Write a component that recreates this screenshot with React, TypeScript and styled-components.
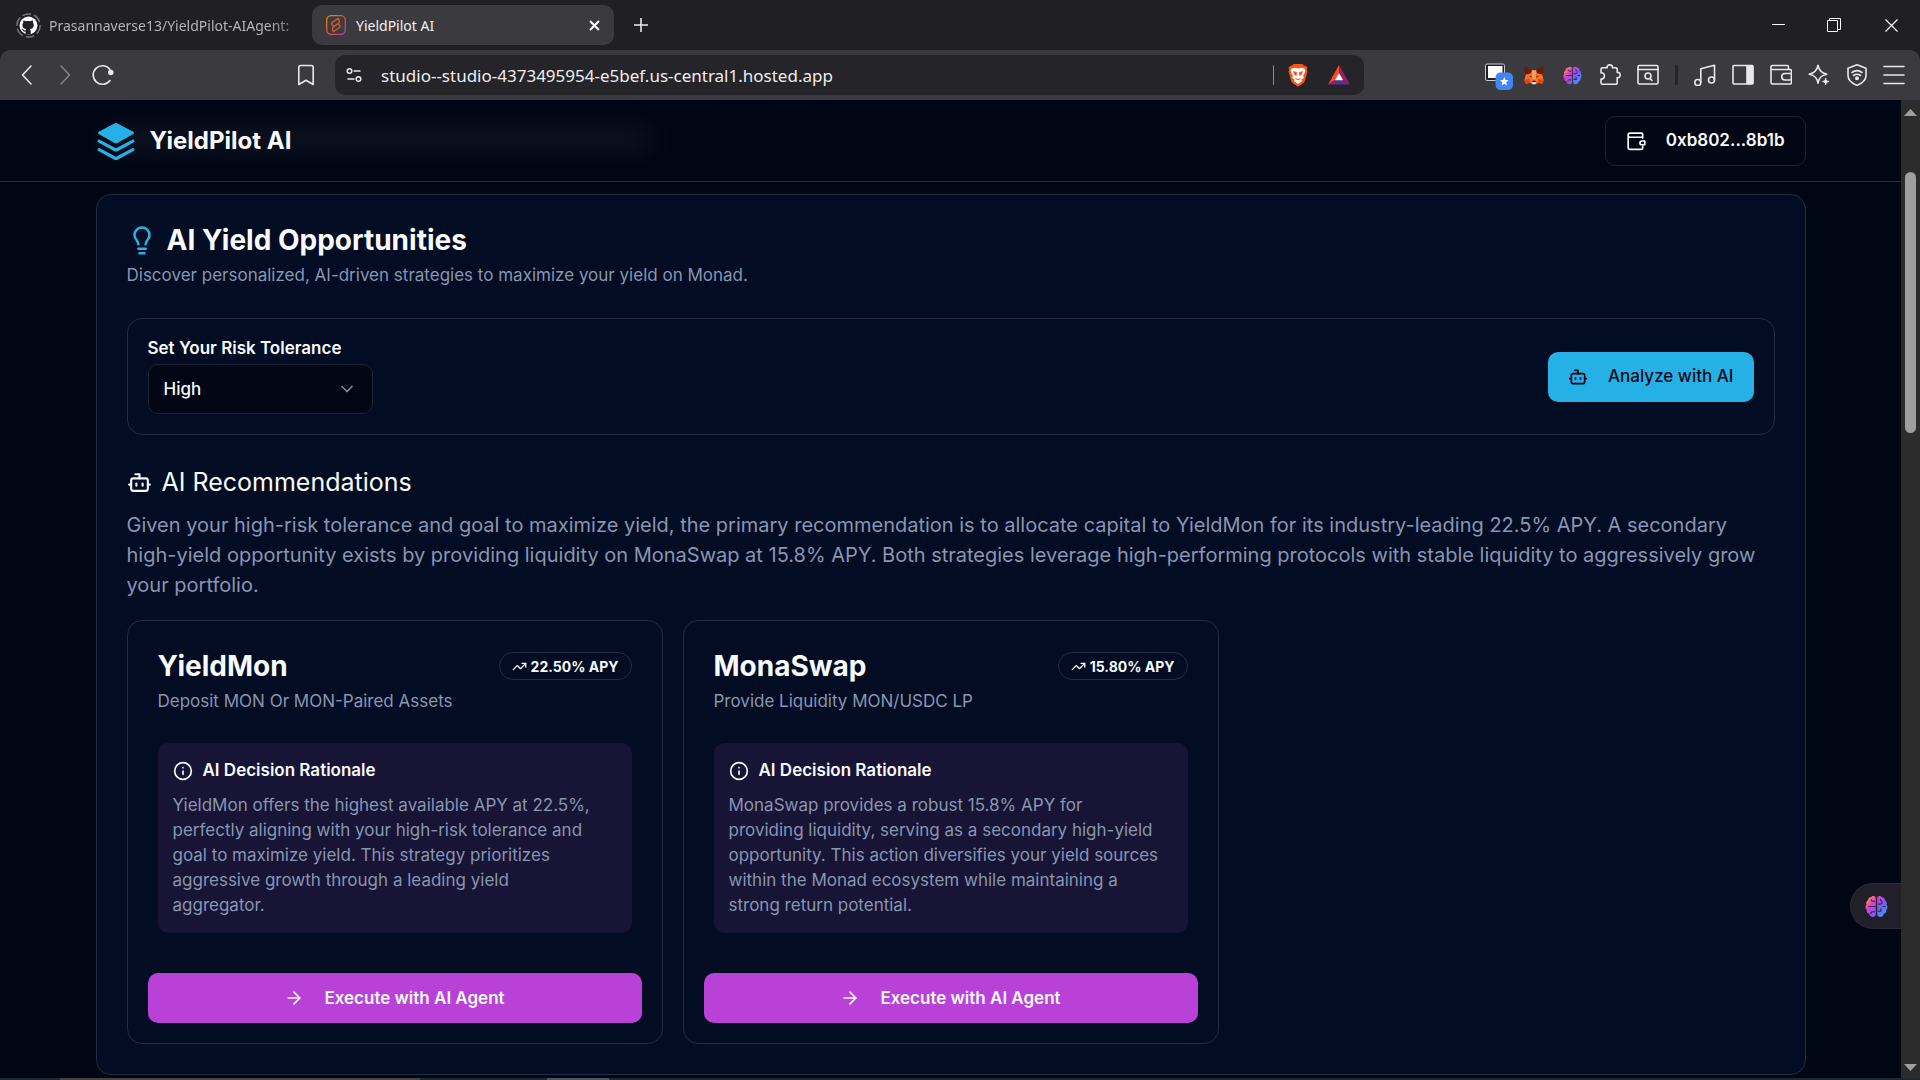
import React from "react";
import styled, { createGlobalStyle, css } from "styled-components";
import { ArrowRight, Bot, ChevronDown, Info, TrendingUp } from "lucide-react";

const color = {
  page: "#010614",
  card: "#020c23",
  line: "#212d44",
  control: "#1c2434",
  text: "#f8fafc",
  muted: "#8996b0",
  primary: "#25b1e6",
  accent: "#b941d8",
  rationale: "#171435",
  frame: "#201f24",
  bar: "#3b3a3f",
  field: "#252429",
  icon: "#e9e9ec",
};

const uiFont = `"Noto Sans", "Open Sans", sans-serif`;
const bodyFont = `Inter, "Liberation Sans", sans-serif`;

const GlobalStyle = createGlobalStyle`
  *, *::before, *::after { box-sizing: border-box; }
  body { margin: 0; background: ${color.page}; overflow: hidden; }
  h1, h2, h3, h4, p { margin: 0; }
  button, input, select { font: inherit; color: inherit; margin: 0; }
  button { border: 0; background: none; padding: 0; cursor: pointer; }
  svg { display: block; flex: none; }
`;

/* ---------- browser frame ---------- */

const Window = styled.div`
  display: flex;
  flex-direction: column;
  height: 100vh;
  background: ${color.frame};
  font-family: ${uiFont};
  color: ${color.icon};
`;

const TabStrip = styled.header`
  display: flex;
  align-items: center;
  height: 50px;
  flex: none;
`;

const Tab = styled.div<{ $active?: boolean }>`
  display: flex;
  align-items: center;
  gap: ${(p) => (p.$active ? 10 : 8)}px;
  width: ${(p) => (p.$active ? 302 : 296)}px;
  height: 40px;
  margin-left: ${(p) => (p.$active ? 0 : 16)}px;
  padding: 0 ${(p) => (p.$active ? 10 : 6)}px 0 ${(p) => (p.$active ? 14 : 0)}px;
  border-radius: 10px;
  font-size: 14px;
  ${(p) =>
    p.$active
      ? css`
          background: ${color.bar};
          color: #f1f1f3;
        `
      : css`
          color: #b4b3b8;
        `}
`;

const TabTitle = styled.button<{ $fade?: boolean }>`
  flex: 1;
  min-width: 0;
  overflow: hidden;
  white-space: nowrap;
  text-align: left;
  ${(p) =>
    p.$fade &&
    css`
      mask-image: linear-gradient(to right, #000 85%, transparent 105%);
    `}
`;

const IconButton = styled.button<{ $w?: number; $dim?: boolean }>`
  display: flex;
  align-items: center;
  justify-content: center;
  width: ${(p) => p.$w ?? 38}px;
  height: 40px;
  flex: none;
  opacity: ${(p) => (p.$dim ? 0.4 : 1)};
`;

const WindowControls = styled.div`
  display: flex;
  margin-left: auto;
`;

const Toolbar = styled.div`
  display: flex;
  align-items: center;
  height: 50px;
  flex: none;
  padding: 0 8px;
  background: ${color.bar};
  border-radius: 10px 10px 0 0;
`;

const NavButtons = styled.div`
  display: flex;
  width: 327px;
  flex: none;
  padding-right: 10px;

  & > :last-child {
    margin-left: auto;
  }
`;

const AddressBar = styled.div`
  display: flex;
  align-items: center;
  flex: 1;
  min-width: 0;
  height: 40px;
  border-radius: 10px;
  background: ${color.field};
`;

const AddressInput = styled.input`
  flex: 1;
  min-width: 0;
  padding: 0 8px;
  border: 0;
  outline: 0;
  background: none;
  font-size: 17px;
  color: #eeeef0;
`;

const Divider = styled.span<{ $light?: boolean }>`
  width: ${(p) => (p.$light ? 1 : 3)}px;
  height: 20px;
  margin: 0 8px;
  border-radius: 1px;
  background: ${(p) => (p.$light ? "#8b8a90" : "#252429")};
`;

const Extensions = styled.div`
  display: flex;
  align-items: center;
  justify-content: flex-end;
  width: 548px;
  flex: none;
`;

const Viewport = styled.div`
  display: flex;
  flex: 1;
  min-height: 0;
`;

const Scrollbar = styled.div`
  display: flex;
  flex-direction: column;
  align-items: center;
  width: 19px;
  flex: none;
  padding: 9px 0 7px;
  background: #2c2c2c;
`;

const ScrollTrack = styled.div`
  flex: 1;
  padding-top: 56px;
`;

const ScrollThumb = styled.div`
  width: 11px;
  height: 261px;
  border-radius: 6px;
  background: #9f9f9f;
`;

const Taskbar = styled.div`
  display: flex;
  gap: 127px;
  height: 2px;
  flex: none;
  padding-left: 60px;
  background: #1d2730;

  &::before {
    content: "";
    width: 360px;
    background: #45423f;
  }

  &::after {
    content: "";
    width: 62px;
    background: #4c565c;
  }
`;

/* ---------- page ---------- */

const Page = styled.div`
  position: relative;
  flex: 1;
  min-width: 0;
  overflow: hidden;
  background: ${color.page};
  color: ${color.text};
  font-family: ${bodyFont};
  font-size: 17px;
  line-height: 25px;
`;

const SiteHeader = styled.header`
  position: relative;
  height: 82px;
  border-bottom: 1px solid ${color.line};
  overflow: hidden;

  &::before {
    content: "";
    position: absolute;
    left: 110px;
    top: 30px;
    width: 540px;
    height: 18px;
    background: rgba(148, 163, 184, 0.12);
    filter: blur(14px);
  }
`;

const Container = styled.div`
  width: 100%;
  max-width: 1750px;
  margin: 0 auto;
  padding: 0 20px;
`;

const HeaderRow = styled(Container)`
  position: relative;
  display: flex;
  align-items: center;
  justify-content: space-between;
  height: 81px;
`;

const Brand = styled.a`
  display: flex;
  align-items: center;
  gap: 14px;
  color: inherit;
  text-decoration: none;
  font-size: 24px;
  font-weight: 700;
`;

const Button = styled.button<{ $kind: "outline" | "primary" | "accent" }>`
  display: flex;
  align-items: center;
  justify-content: center;
  gap: 20px;
  height: 50px;
  padding: 0 20px;
  border-radius: 10px;
  font-size: 17px;
  font-weight: 500;
  white-space: nowrap;
  ${(p) =>
    p.$kind === "outline" &&
    css`
      border: 1px solid ${color.control};
      background: ${color.page};
      font-weight: 600;
    `}
  ${(p) =>
    p.$kind === "primary" &&
    css`
      background: ${color.primary};
      color: #020817;
    `}
  ${(p) =>
    p.$kind === "accent" &&
    css`
      background: ${color.accent};
      font-weight: 600;
    `}
`;

const Main = styled(Container)`
  padding-top: 12px;
`;

const Panel = styled.section`
  padding: 30px;
  border: 1px solid ${color.line};
  border-radius: 15px;
  background: ${color.card};
`;

const PanelTitle = styled.h1`
  display: flex;
  align-items: center;
  gap: 10px;
  font-size: 28px;
  line-height: 30px;
  font-weight: 700;
`;

const Lead = styled.p`
  margin-top: 8px;
  color: ${color.muted};
`;

const RiskBox = styled.div`
  display: flex;
  align-items: center;
  justify-content: space-between;
  margin-top: 30px;
  padding: 20px;
  border: 1px solid ${color.line};
  border-radius: 15px;
`;

const Field = styled.div`
  display: grid;
  gap: 7px;
`;

const Label = styled.label`
  line-height: 18px;
  font-weight: 600;
`;

const SelectBox = styled.div`
  display: grid;
  align-items: center;
  width: 225px;

  & > * {
    grid-area: 1 / 1;
  }

  & > svg {
    justify-self: end;
    margin-right: 16px;
    pointer-events: none;
    opacity: 0.55;
  }
`;

const Select = styled.select`
  appearance: none;
  width: 100%;
  height: 50px;
  padding: 0 15px;
  border: 1px solid ${color.control};
  border-radius: 10px;
  background: ${color.page};
  font-weight: 500;
`;

const SectionTitle = styled.h2`
  display: flex;
  align-items: center;
  gap: 10px;
  margin-top: 30px;
  font-size: 25px;
  line-height: 35px;
  font-weight: 400;
`;

const Summary = styled.p`
  margin-top: 10px;
  font-size: 20px;
  line-height: 30px;
  color: ${color.muted};
`;

const Cards = styled.div`
  display: grid;
  grid-template-columns: repeat(3, 1fr);
  gap: 20px;
  margin-top: 20px;
`;

const Card = styled.article`
  display: flex;
  flex-direction: column;
  justify-content: space-between;
  padding: 30px 20px 20px;
  border: 1px solid ${color.line};
  border-radius: 15px;
`;

const CardBody = styled.div`
  padding: 0 10px;
`;

const CardHead = styled.div`
  display: flex;
  align-items: center;
  justify-content: space-between;
`;

const CardTitle = styled.h3`
  font-size: 28px;
  line-height: 30px;
  font-weight: 700;
`;

const Badge = styled.span`
  display: flex;
  align-items: center;
  gap: 4px;
  height: 28px;
  padding: 0 12px;
  border: 1px solid ${color.line};
  border-radius: 14px;
  font-size: 14px;
  font-weight: 700;
`;

const Rationale = styled.div`
  margin: 29px 0 40px;
  padding: 15px 28px 15px 15px;
  border-radius: 10px;
  background: ${color.rationale};
  color: ${color.muted};
`;

const RationaleTitle = styled.h4`
  display: flex;
  align-items: center;
  gap: 10px;
  margin-bottom: 10px;
  font-size: 17px;
  font-weight: 600;
  color: ${color.text};
`;

const Assistant = styled.button`
  position: absolute;
  right: 0;
  top: 783px;
  display: flex;
  align-items: center;
  width: 51px;
  height: 46px;
  padding-left: 14px;
  border: 1px solid #2b2933;
  border-right: 0;
  border-radius: 23px 0 0 23px;
  background: #211f2a;
`;

/* ---------- drawings ---------- */

const line = {
  fill: "none",
  stroke: "currentColor",
  strokeWidth: 1.6,
  strokeLinecap: "round" as const,
  strokeLinejoin: "round" as const,
};

const GithubMark = () => (
  <svg width="25" height="25" viewBox="0 0 25 25">
    <circle cx="12.5" cy="12.5" r="11.6" fill="none" stroke="#77767b" strokeWidth="1.5" strokeDasharray="9 3" />
    <circle cx="12.5" cy="12.5" r="9" fill="#fff" />
    <path
      fill="#201f24"
      d="M9.6 21.2v-2.6c-2 .4-2.7-.6-3.1-1.5-.2-.5-.6-.9-1-1.1.9-.5 1.6.1 2.1.8.5.8 1.1.9 2 .6.1-.6.4-1 .7-1.3-2.3-.3-3.9-1.2-3.9-4 0-1 .3-1.7.9-2.4-.2-.6-.2-1.5.1-2.3.8 0 1.7.5 2.3.9 1.6-.4 3.2-.4 4.8 0 .6-.4 1.5-.9 2.3-.9.3.8.3 1.7.1 2.3.6.7.9 1.4.9 2.4 0 2.8-1.6 3.7-3.9 4 .5.4.8 1.1.8 2v3.1z"
    />
  </svg>
);

const StudioMark = () => (
  <svg width="20" height="20" viewBox="0 0 20 20" fill="none">
    <defs>
      <linearGradient id="studio" x1="0" y1="0" x2="1" y2="1">
        <stop offset="0" stopColor="#f08a00" />
        <stop offset=".5" stopColor="#e0552f" />
        <stop offset="1" stopColor="#b23cc0" />
      </linearGradient>
    </defs>
    <rect x=".7" y=".7" width="18.6" height="18.6" rx="4.5" stroke="url(#studio)" strokeWidth="1.3" />
    <path
      d="M12.3 3.3 6.2 7.4c-1 .8-.9 2 .1 2.6l2 1.2 4.7-3.5c.7-.6.7-1.3.2-2zM7.3 16.7l6.2-4.2c1-.8.8-1.9-.2-2.5l-1.800-1.100-4.700 3.500c-.7.6-.7 1.300-.2 2z"
      stroke="#e0562f"
      strokeWidth="1.3"
      strokeLinejoin="round"
    />
  </svg>
);

const Glyph = ({ d, size = 22, children }: { d?: string; size?: number; children?: React.ReactNode }) => (
  <svg width={size} height={size} viewBox="0 0 22 22" {...line}>
    {d && <path d={d} />}
    {children}
  </svg>
);

const BraveLion = () => (
  <svg width="20" height="24" viewBox="0 0 20 24">
    <path fill="#fb5412" d="M5.5 1h9l1.500 1.800 1.800-.1 1.700 2.300-.7 1.800.6 2-2.600 9.300c-.3 1-.9 1.700-1.700 2.200L10 23.700l-5.100-3.400c-.8-.5-1.400-1.200-1.700-2.200L.6 8.800l.6-2L.5 5l1.700-2.300 1.800.1z" />
    <path fill="#fff" d="M3.5 5.500 7 4.800l3 .8 3-.8 3.500.7 1 2.600-2.400 4.800.7 2-2.700 1.900 1.200 1.300L10 21l-4.300-2.900 1.200-1.300-2.700-1.900.7-2L2.500 8.100z" />
    <path fill="#fb5412" d="m5 8.300 3.400.4.6 1.400-.5 3-2-1.200zM15 8.300l-3.400.4-.6 1.400.5 3 2-1.200zM7 14.600l3 1.600 3-1.600-.8 1.500L10 17.600l-2.200-1.500z" />
  </svg>
);

const BatTriangle = () => (
  <svg width="22" height="20" viewBox="0 0 22 20">
    <path fill="#ff4724" d="M11 0 0 19.500l7-4.300L11 8z" />
    <path fill="#9e1f63" d="m11 0 11 19.500-7-4.300L11 8z" />
    <path fill="#662d91" d="M0 19.500h22l-7-4.300H7z" />
    <path fill="#fff" d="m11 8-4.200 7.300h8.400z" />
  </svg>
);

const PinnedWindow = () => (
  <svg width="30" height="30" viewBox="0 0 30 30">
    <rect x="1.5" y="4" width="19" height="16.500" rx="1.500" fill="#222" stroke="#c9c9cc" />
    <rect x="4" y="6" width="14.500" height="12" fill="#fff" />
    <rect x="11.500" y="12.500" width="17.500" height="17.500" rx="5" fill="#4285f4" />
    <path fill="#fff" d="m20.300 17 1.200 3.100 3.200.2-2.500 2 .8 3.200-2.700-1.800-2.700 1.800.8-3.200-2.500-2 3.200-.2z" />
  </svg>
);

const Fox = () => (
  <svg width="20" height="20" viewBox="0 0 20 20">
    <path fill="#f8702c" d="M2.200 8 6.500 5.200h7L17.800 8l1 4 .9 3.500-1.500 3.200-4.200-1-1.800 1.300H7.800L6 17.700l-4.200 1L.3 15.500 1.200 12z" />
    <path fill="#6b1a05" d="M1 .8 8 5.700 6.500 8.600 1.500 9.600.3 6.200zM19 .8l-7 4.900 1.500 2.900 5 1 1.200-3.400z" />
    <path fill="#ff9d5c" d="m8 5.600 2-.4 2 .4-.3 8.400H8.300z" />
    <path fill="#e3470d" d="m.3 15 5.200-1.200.9 3.700-4.600 1.200zM19.700 15l-5.200-1.200-.9 3.700 4.600 1.200z" />
    <path fill="#27242c" d="m5.200 10.800 2.600.7-.5 1.200zM14.800 10.800l-2.600.7.5 1.200zM8.500 15.700h3l.3 1.300H8.200z" />
    <path fill="#efe9e4" d="M7.800 17.200h4.400l-.7 2H8.500z" />
  </svg>
);

const Brain = ({ size, id }: { size: number; id: string }) => (
  <svg width={size} height={size} viewBox="0 0 24 24">
    <defs>
      <linearGradient id={id} x1="0" y1=".1" x2="1" y2=".9">
        <stop offset=".05" stopColor="#ff9a3d" />
        <stop offset=".3" stopColor="#e53bd0" />
        <stop offset=".62" stopColor="#7b5cf0" />
        <stop offset="1" stopColor="#2ba4ff" />
      </linearGradient>
    </defs>
    <path
      fill={`url(#${id})`}
      d="M11.300 2.600C10.500.6 7.600.4 6.300 2.300 4.200 2.200 3 3.800 3.200 5.600 1.300 6.500.8 8.500 1.700 10 .1 11.500.1 14 1.700 15.300c-.4 2.200.8 3.800 2.600 4.300.6 2.600 2.600 3.800 4.600 3.300 1.400-.3 2.300-1.300 2.400-2.500zM12.700 2.600c.8-2 3.700-2.200 5-.3 2.100-.1 3.300 1.500 3.100 3.300 1.900.9 2.400 2.900 1.500 4.400 1.600 1.500 1.600 4 0 5.300.4 2.200-.8 3.800-2.600 4.300-.6 2.600-2.600 3.800-4.600 3.300-1.400-.3-2.300-1.300-2.400-2.500z"
    />
    <path
      fill="none"
      stroke="#29224a"
      strokeWidth="1.200"
      strokeLinecap="round"
      d="M10.500 12H4M10 6.500H8.500C7 6.500 6.500 5.500 6.500 5M10 17.500H8c-1.500 0-2 1-2 1.700M14 9.500h2c1.500 0 2-1 2-2M14 17h2.500M16.500 17V14.500M16 4.500l1 2M19 12h2"
    />
  </svg>
);

const LayersLogo = () => (
  <svg width="40" height="40" viewBox="0 0 40 40" fill={color.primary}>
    <path d="M18.500 2.400a3 3 0 0 1 3 0L37.300 10.700c1.200.6 1.200 1.700 0 2.300L21.500 22a3 3 0 0 1-3 0L2.700 13c-1.200-.6-1.200-1.700 0-2.300z" />
    <path
      d="M3.100 20.100 18.700 28.500a2.700 2.700 0 0 0 2.600 0L36.900 20.100M3.100 28.600 18.700 37a2.700 2.700 0 0 0 2.600 0L36.900 28.600"
      fill="none"
      stroke={color.primary}
      strokeWidth="3.200"
      strokeLinecap="round"
    />
  </svg>
);

const Bulb = () => (
  <svg width="30" height="30" viewBox="0 0 24 24" fill="none" stroke={color.primary} strokeWidth="2" strokeLinecap="round" strokeLinejoin="round">
    <path d="M9.200 16.200c0-2-.6-2.900-1.600-4.200a6 6 0 1 1 8.800 0c-1 1.300-1.600 2.200-1.600 4.200" strokeLinecap="butt" />
    <path d="M9 19h6M10 22.500h4" />
  </svg>
);

const WalletClasp = () => (
  <svg width="20" height="20" viewBox="0 0 24 24" {...line} strokeWidth={2}>
    <path d="M20 8.500V7.500H5a2.400 2.400 0 0 1 0-5h13.500a1.500 1.500 0 0 1 1.500 1.500v3.500M2.600 5v14.500A2.500 2.500 0 0 0 5 22h13a2 2 0 0 0 2-2v-1.500" />
    <path d="M22.500 12v4.500H19a2.250 2.250 0 0 1 0-4.500z" />
  </svg>
);

/* ---------- content ---------- */

type Strategy = { name: string; action: string; apy: string; rationale: string };

const strategies: Strategy[] = [
  {
    name: "YieldMon",
    action: "Deposit MON Or MON-Paired Assets",
    apy: "22.50% APY",
    rationale:
      "YieldMon offers the highest available APY at 22.5%, perfectly aligning with your high-risk tolerance and goal to maximize yield. This strategy prioritizes aggressive growth through a leading yield aggregator.",
  },
  {
    name: "MonaSwap",
    action: "Provide Liquidity MON/USDC LP",
    apy: "15.80% APY",
    rationale:
      "MonaSwap provides a robust 15.8% APY for providing liquidity, serving as a secondary high-yield opportunity. This action diversifies your yield sources within the Monad ecosystem while maintaining a strong return potential.",
  },
];

const StrategyCard = ({ name, action, apy, rationale }: Strategy) => (
  <Card>
    <CardBody>
      <CardHead>
        <CardTitle>{name}</CardTitle>
        <Badge>
          <TrendingUp size={15} />
          {apy}
        </Badge>
      </CardHead>
      <Lead>{action}</Lead>
      <Rationale>
        <RationaleTitle>
          <Info size={20} />
          AI Decision Rationale
        </RationaleTitle>
        <p>{rationale}</p>
      </Rationale>
    </CardBody>
    <Button $kind="accent">
      <ArrowRight size={20} />
      Execute with AI Agent
    </Button>
  </Card>
);

const BrowserChrome = () => (
  <>
    <TabStrip>
      <Tab>
        <GithubMark />
        <TabTitle $fade>Prasannaverse13/YieldPilot-AIAgent:</TabTitle>
      </Tab>
      <Tab $active>
        <StudioMark />
        <TabTitle>YieldPilot AI</TabTitle>
        <IconButton $w={20} aria-label="Close tab">
          <svg width="11" height="11" viewBox="0 0 11 11" stroke="#fff" strokeWidth="2">
            <path d="m1 1 9 9M10 1l-9 9" />
          </svg>
        </IconButton>
      </Tab>
      <IconButton $w={54} aria-label="New tab">
        <svg width="14" height="14" viewBox="0 0 14 14" stroke="#e9e9ec" strokeWidth="1.6">
          <path d="M7 0v14M0 7h14" />
        </svg>
      </IconButton>
      <WindowControls>
        <IconButton $w={56} aria-label="Minimize">
          <svg width="13" height="13" viewBox="0 0 13 13" stroke="#fff">
            <path d="M0 5.500h13" />
          </svg>
        </IconButton>
        <IconButton $w={56} aria-label="Restore">
          <svg width="14" height="14" viewBox="0 0 14 14" fill="none" stroke="#fff">
            <path d="M.5 2.500h10v11H.5zM2.500 2.500v-2h11v11h-3" />
          </svg>
        </IconButton>
        <IconButton $w={58} aria-label="Close window">
          <svg width="13" height="13" viewBox="0 0 13 13" stroke="#fff" strokeWidth="1.2">
            <path d="m.5.5 12 12M12.500.5l-12 12" />
          </svg>
        </IconButton>
      </WindowControls>
    </TabStrip>
    <Toolbar>
      <NavButtons>
        <IconButton aria-label="Back">
          <Glyph d="M15 2 6.500 11 15 20" />
        </IconButton>
        <IconButton $dim aria-label="Forward">
          <Glyph d="M7 2l8.500 9L7 20" />
        </IconButton>
        <IconButton aria-label="Reload">
          <Glyph>
            <path d="M18 16.500A9.300 9.300 0 1 1 18 5.500" />
            <circle cx="18.800" cy="8.500" r="2" fill="currentColor" />
          </Glyph>
        </IconButton>
        <IconButton aria-label="Bookmark this page">
          <Glyph d="M3.800 3.500A2 2 0 0 1 5.800 1.500H16.200a2 2 0 0 1 2 2V20.500L11 16.300 3.800 20.500z" />
        </IconButton>
      </NavButtons>
      <AddressBar>
        <IconButton aria-label="Site settings">
          <svg width="16" height="16" viewBox="0 0 16 16" {...line} strokeWidth={1.5}>
            <circle cx="3.500" cy="4" r="2.300" />
            <path d="M8 4h6M2 12h6" />
            <circle cx="12.500" cy="12" r="2.300" />
          </svg>
        </IconButton>
        <AddressInput aria-label="Address" defaultValue="studio--studio-4373495954-e5bef.us-central1.hosted.app" />
        <Divider $light />
        <IconButton $w={32} aria-label="Brave Shields">
          <BraveLion />
        </IconButton>
        <IconButton $w={50} aria-label="Brave Rewards">
          <BatTriangle />
        </IconButton>
      </AddressBar>
      <Extensions>
        <IconButton $w={32} aria-label="Pinned extension">
          <PinnedWindow />
        </IconButton>
        <IconButton aria-label="MetaMask">
          <Fox />
        </IconButton>
        <IconButton aria-label="Brain extension">
          <Brain size={19} id="brain-small" />
        </IconButton>
        <IconButton aria-label="Extensions">
          <Glyph d="M2 5.200a1.500 1.500 0 0 1 1.500-1.500H8.200C7.700 2 9 .9 10.800.9s3.100 1.100 2.600 2.800h3.300a1.500 1.500 0 0 1 1.500 1.500V8.500c1.800-.4 3 .8 3 2.500s-1.200 3-3 2.500v5.300a1.500 1.500 0 0 1-1.500 1.500H3.500A1.500 1.500 0 0 1 2 18.800V15c2.400.2 3.400-1.500 3.400-3.300S4.200 8.500 2 8.900z" />
        </IconButton>
        <IconButton aria-label="Search in page">
          <Glyph>
            <rect x="1" y="1.500" width="20" height="18.500" rx="1.500" />
            <path d="M1 5.500h20M13 14.500l2 2" />
            <circle cx="11" cy="12" r="3" />
          </Glyph>
        </IconButton>
        <Divider />
        <IconButton aria-label="Playlist">
          <Glyph>
            <circle cx="3.800" cy="18.500" r="3" />
            <circle cx="17.500" cy="16" r="3" />
            <path d="M6.800 18.500V4.800L20.500 1.300V16" />
          </Glyph>
        </IconButton>
        <IconButton aria-label="Side panel">
          <Glyph>
            <rect x="1" y="1.500" width="20" height="18.500" rx="1" />
            <path d="M15 2h5.500v17.500H15z" fill="currentColor" />
          </Glyph>
        </IconButton>
        <IconButton aria-label="Wallet">
          <Glyph>
            <path d="M18.500 5.500V3a1.500 1.500 0 0 0-1.500-1.500H2.500a1.500 1.500 0 0 0-1.500 1.500V18.500A1.500 1.500 0 0 0 2.500 20H20a1.500 1.500 0 0 0 1.500-1.500V7A1.500 1.500 0 0 0 20 5.500H1" />
            <path d="M21.500 9.500H15a3.250 3.250 0 0 0 0 6.500h6.500z" />
          </Glyph>
        </IconButton>
        <IconButton aria-label="Leo AI">
          <Glyph>
            <path d="M10 1.200c.8 5.300 3 7.800 8.800 9-5.800 1.200-8 3.600-8.800 9-.8-5.400-3-7.800-8.800-9C7 9 9.200 6.500 10 1.200z" />
            <path d="M17.700 14.500c.3 1.800 1 2.700 3.200 3-2.200.4-2.900 1.300-3.200 3.200-.3-1.900-1-2.800-3.200-3.200 2.200-.3 2.900-1.200 3.200-3z" fill="currentColor" strokeWidth="1" />
          </Glyph>
        </IconButton>
        <IconButton aria-label="VPN">
          <Glyph>
            <path d="M11 .8 20 4.200v7.300c0 4.500-4 7.800-9 9.900-5-2.100-9-5.400-9-9.900V4.200z" />
            <path d="M6 8.500c3-2.300 7-2.300 10 0M7.500 11.500c2.200-1.600 4.800-1.600 7 0" />
            <circle cx="11" cy="14.300" r="1.200" fill="currentColor" />
          </Glyph>
        </IconButton>
        <IconButton $w={36} aria-label="Menu">
          <Glyph d="M1 2.500h20M1 11h20M1 19.500h20" />
        </IconButton>
      </Extensions>
    </Toolbar>
  </>
);

export default function App() {
  return (
    <Window>
      <GlobalStyle />
      <BrowserChrome />
      <Viewport>
        <Page>
          <SiteHeader>
            <HeaderRow>
              <Brand href="#">
                <LayersLogo />
                YieldPilot AI
              </Brand>
              <Button $kind="outline">
                <WalletClasp />
                0xb802...8b1b
              </Button>
            </HeaderRow>
          </SiteHeader>
          <Main as="main">
            <Panel>
              <PanelTitle>
                <Bulb />
                AI Yield Opportunities
              </PanelTitle>
              <Lead>Discover personalized, AI-driven strategies to maximize your yield on Monad.</Lead>
              <RiskBox>
                <Field>
                  <Label htmlFor="risk">Set Your Risk Tolerance</Label>
                  <SelectBox>
                    <Select id="risk" defaultValue="High">
                      <option>Low</option>
                      <option>Medium</option>
                      <option>High</option>
                    </Select>
                    <ChevronDown size={20} />
                  </SelectBox>
                </Field>
                <Button $kind="primary">
                  <Bot size={20} />
                  Analyze with AI
                </Button>
              </RiskBox>
              <SectionTitle>
                <Bot size={25} />
                AI Recommendations
              </SectionTitle>
              <Summary>
                Given your high-risk tolerance and goal to maximize yield, the primary recommendation is to allocate
                capital to YieldMon for its industry-leading 22.5% APY. A secondary high-yield opportunity exists by
                providing liquidity on MonaSwap at 15.8% APY. Both strategies leverage high-performing protocols with
                stable liquidity to aggressively grow your portfolio.
              </Summary>
              <Cards>
                {strategies.map((s) => (
                  <StrategyCard key={s.name} {...s} />
                ))}
              </Cards>
            </Panel>
          </Main>
          <Assistant aria-label="Open assistant">
            <Brain size={23} id="brain-large" />
          </Assistant>
        </Page>
        <Scrollbar aria-hidden="true">
          <svg width="13" height="7" viewBox="0 0 13 7" fill="#9f9f9f">
            <path d="M6.500 0 13 7H0z" />
          </svg>
          <ScrollTrack>
            <ScrollThumb />
          </ScrollTrack>
          <svg width="13" height="7" viewBox="0 0 13 7" fill="#9f9f9f">
            <path d="M0 0h13L6.500 7z" />
          </svg>
        </Scrollbar>
      </Viewport>
      <Taskbar />
    </Window>
  );
}
